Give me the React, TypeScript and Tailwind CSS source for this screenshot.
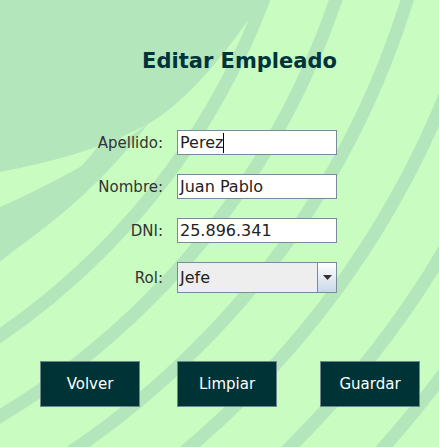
const RINGS = [643, 709, 777, 845, 913, 981, 1049, 1117];

const FIELDS = [
  { label: "Apellido:", value: "Perez", caret: true },
  { label: "Nombre:", value: "Juan Pablo" },
  { label: "DNI:", value: "25.896.341" },
];

function Backdrop() {
  return (
    <svg
      className="absolute inset-0"
      width="439"
      height="447"
      viewBox="0 0 439 447"
    >
      <rect width="439" height="447" fill="#c8fcc0" />
      {RINGS.map((r) => (
        <circle
          key={r}
          cx="-400"
          cy="-250"
          r={r}
          fill="none"
          stroke="#b4e6bc"
          strokeWidth="13"
        />
      ))}
      <path d="M0,0 H262 C215,70 180,105 148,124 C100,150 50,162 0,172 Z" fill="#b4e6bc" />
      <path d="M0,207 C50,185 100,158 148,124 Q90,200 0,260 Z" fill="#b4e6bc" />
    </svg>
  );
}

function App() {
  return (
    <div className="relative w-[439px] h-[447px] overflow-hidden font-['DejaVu_Sans',sans-serif]">
      <Backdrop />
      <div className="relative flex flex-col">
        <h1 className="pt-[49px] pl-[40px] text-center text-[21px] leading-[24px] font-bold text-[#00333a]">
          Editar Empleado
        </h1>

        <div className="mt-[57px] flex flex-col gap-[19px] pl-[63px]">
          {FIELDS.map((f) => (
            <div key={f.label} className="flex items-center h-[25px]">
              <span className="w-[100px] pt-[1px] text-right text-[15px] leading-[18px] text-[#333333]">
                {f.label}
              </span>
              <div className="ml-[14px] flex items-center w-[160px] h-[25px] border border-[#7a8a99] bg-white pl-[2px] text-[16px] leading-[19px] text-[#222222]">
                {f.value}
                {f.caret && <span className="w-px h-[20px] bg-black" />}
              </div>
            </div>
          ))}
          <div className="flex items-center h-[31px]">
            <span className="w-[100px] text-right text-[15px] leading-[18px] text-[#333333]">
              Rol:
            </span>
            <div className="ml-[14px] flex w-[160px] h-[31px] border border-[#7a8a99] bg-[#eeeeee]">
              <span className="flex-1 flex items-center pl-[2px] text-[16px] leading-[19px] text-[#222222]">
                Jefe
              </span>
              <span className="w-[19px] flex items-center justify-center border-l border-[#7a8a99] bg-gradient-to-b from-white to-[#c8d8e8]">
                <svg width="9" height="5" viewBox="0 0 9 5">
                  <path d="M0,0 H9 L4.5,5 Z" fill="#333333" />
                </svg>
              </span>
            </div>
          </div>
        </div>

        <div className="mt-[68px] flex pl-[40px]">
          {["Volver", "Limpiar", "Guardar"].map((b, i) => (
            <button
              key={b}
              className={
                "w-[100px] h-[46px] border border-[#6f8590] bg-[#003335] text-white text-[15px] " +
                (i === 1 ? "ml-[37px]" : i === 2 ? "ml-[43px]" : "")
              }
            >
              {b}
            </button>
          ))}
        </div>
      </div>
    </div>
  );
}

export default App;
